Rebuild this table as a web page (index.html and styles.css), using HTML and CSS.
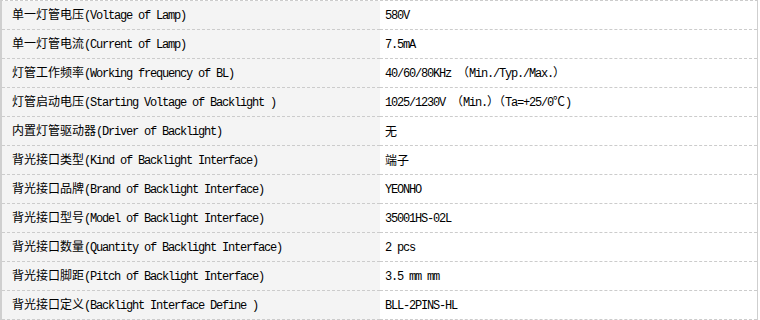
FILE: index.html
```html
<!DOCTYPE html>
<html lang="zh">
<head>
<meta charset="utf-8">
<title>背光参数</title>
<link rel="stylesheet" href="styles.css">
</head>
<body>
<table class="spec">
  <tbody>
    <tr><td class="k">单一灯管电压<span class="en">(Voltage of Lamp)</span></td><td class="v"><span class="en">580V</span></td></tr>
    <tr><td class="k">单一灯管电流<span class="en">(Current of Lamp)</span></td><td class="v"><span class="en">7.5mA</span></td></tr>
    <tr><td class="k">灯管工作频率<span class="en">(Working frequency of BL)</span></td><td class="v"><span class="en">40/60/80KHz </span>（<span class="en">Min./Typ./Max.</span>）</td></tr>
    <tr><td class="k">灯管启动电压<span class="en">(Starting Voltage of Backlight )</span></td><td class="v"><span class="en">1025/1230V </span>（<span class="en">Min.</span>）（<span class="en">Ta=+25/0</span>℃<span class="en">)</span></td></tr>
    <tr><td class="k">内置灯管驱动器<span class="en">(Driver of Backlight)</span></td><td class="v">无</td></tr>
    <tr><td class="k">背光接口类型<span class="en">(Kind of Backlight Interface)</span></td><td class="v">端子</td></tr>
    <tr><td class="k">背光接口品牌<span class="en">(Brand of Backlight Interface)</span></td><td class="v"><span class="en">YEONHO</span></td></tr>
    <tr><td class="k">背光接口型号<span class="en">(Model of Backlight Interface)</span></td><td class="v"><span class="en">35001HS-02L</span></td></tr>
    <tr><td class="k">背光接口数量<span class="en">(Quantity of Backlight Interface)</span></td><td class="v"><span class="en">2 pcs</span></td></tr>
    <tr><td class="k">背光接口脚距<span class="en">(Pitch of Backlight Interface)</span></td><td class="v"><span class="en">3.5 mm mm</span></td></tr>
    <tr><td class="k">背光接口定义<span class="en">(Backlight Interface Define )</span></td><td class="v"><span class="en">BLL-2PINS-HL</span></td></tr>
  </tbody>
</table>
</body>
</html>
```
FILE: styles.css
```css
html, body {
  margin: 0;
  padding: 0;
  background: #ffffff;
}

.spec {
  width: 758px;
  border-collapse: separate;
  border-spacing: 0;
  border-left: 2px solid #cfcfcf;
  border-right: 1px solid #cfcfcf;
  border-top: 1px dashed #cccccc;
  table-layout: fixed;
}

.spec td {
  height: 28px;
  padding: 0;
  border-bottom: 1px dashed #cccccc;
  vertical-align: middle;
  font-family: "Noto Sans CJK SC", sans-serif;
  font-size: 12px;
  line-height: 16px;
  color: #000000;
  white-space: nowrap;
}

.spec .k {
  width: 368px;
  padding-left: 10px;
  background: #f4f4f4;
}

.spec .v {
  padding-left: 5px;
  background: #ffffff;
}

.en {
  font-family: "Liberation Mono", monospace;
  letter-spacing: -1.2px;
}
```
